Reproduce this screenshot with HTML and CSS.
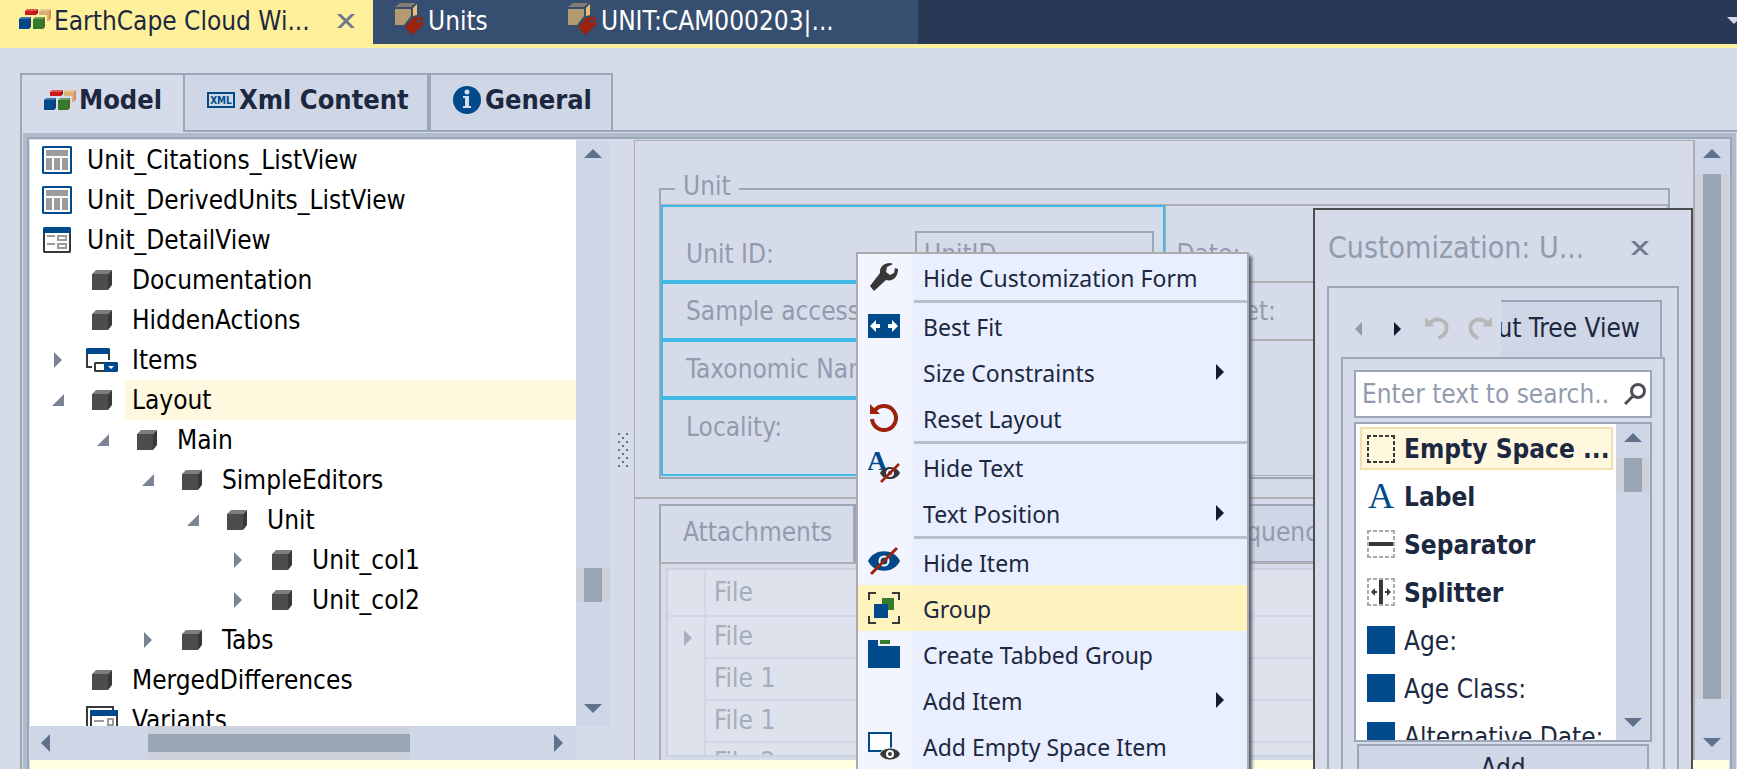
FILE: index.html
```html
<!DOCTYPE html>
<html lang="en">
<head>
<meta charset="utf-8">
<title>EarthCape Cloud</title>
<link rel="stylesheet" href="styles.css">
</head>
<body>
<svg class="defs" aria-hidden="true">
  <symbol id="cube" viewBox="0 0 20 20"><path fill="#7d7d7d" d="M4 0h16l-4 4H0z"/><path fill="#4c4c4c" d="M0 4h16v16H0z"/><path fill="#383838" d="M16 4l4-4v15l-4 5z"/></symbol>
  <symbol id="blocks" viewBox="0 0 32 20"><path fill="#e0574f" d="M8 0h11l-2 2H6z"/><path fill="#cb1a1b" d="M6 2h11v4H6z"/><path fill="#a01515" d="M17 2l2-2v4l-2 2z"/><path fill="#e8c691" d="M22 0h10l-2 2H20z"/><path fill="#dbb078" d="M20 2h10v10h-2V6h-8z"/><path fill="#d08f5c" d="M30 2l2-2v9l-2 3z"/><path fill="#3d75ad" d="M2 8h10l-2 2H0z"/><path fill="#004a8c" d="M0 10h10v10H0z"/><path fill="#173a77" d="M10 10l2-2v10l-2 2z"/><path fill="#69a164" d="M16 8h10l-2 2H14z"/><path fill="#337b2d" d="M14 10h10v10H14z"/><path fill="#56611f" d="M24 10l2-2v10l-2 2z"/></symbol>
  <symbol id="tagbox" viewBox="0 0 28 32"><path fill="#857d73" d="M5 0h15l-4 4H0z"/><path fill="#b39a70" d="M0 6h16v7l-7 9H0z"/><path fill="#e9bd74" d="M22 1v11l-4 1V5z"/><path fill="#9c220e" fill-rule="evenodd" d="M19 14h7l2 2v6L17 32l-7-8zM24 16a2 2 0 100 4 2 2 0 000-4z"/></symbol>
  <symbol id="listview" viewBox="0 0 30 28"><path fill="#004a8c" fill-rule="evenodd" d="M1 0h28l1 1v26l-1 1H1l-1-1V1zM2 2v24h26V2z"/><path fill="#9b9b9b" d="M4 4h22v6H4zM4 12h6v12H4zM12 12h6v12h-6zM20 12h6v12h-6z"/></symbol>
  <symbol id="detail" viewBox="0 0 28 26"><path fill="#383838" fill-rule="evenodd" d="M0 4h28v21l-1 1H1l-1-1zM2 6v18h24V6z"/><path fill="#004a8c" d="M1 0h26l1 1v5H0V1z"/><path fill="#9b9b9b" d="M4 8h8v2H4zM4 16h8v2H4z"/><path fill="none" stroke="#9b9b9b" stroke-width="2" d="M15 9h8v4h-8zM15 17h8v4h-8z"/></symbol>
  <symbol id="items" viewBox="0 0 32 24"><path fill="none" stroke="#383838" stroke-width="2" d="M1 5v14h5M23 5v7"/><path fill="#004a8c" d="M1 0h22l1 1v5H0V1z"/><path fill="#383838" d="M9 14h9v10H9l-1-1v-8z"/><path fill="#fff" d="M10 16h8v6h-8z"/><path fill="#004a8c" d="M18 14h13l1 1v8l-1 1H18z"/><path fill="#fff" d="M22 18h6l-3 3z"/></symbol>
  <symbol id="variants" viewBox="0 0 32 28"><path fill="none" stroke="#383838" stroke-width="2" d="M1 28V1h26v3"/><path fill="#383838" d="M4 4h28v24h-2V10H6v18H4z"/><path fill="#004a8c" d="M5 4h26l1 1v5H4V5z"/><path fill="#9b9b9b" d="M8 14h10v2H8z"/><path fill="none" stroke="#9b9b9b" stroke-width="2" d="M22 13h5v6h-5z"/></symbol>
  <symbol id="closed" viewBox="0 0 8 16"><path d="M0 0l8 8-8 8z"/></symbol>
  <symbol id="opened" viewBox="0 0 12 12"><path d="M12 0v12H0z"/></symbol>
  <symbol id="up" viewBox="0 0 18 9"><path d="M9 0l9 9H0z"/></symbol>
  <symbol id="down" viewBox="0 0 18 9"><path d="M0 0h18L9 9z"/></symbol>
  <symbol id="left" viewBox="0 0 9 18"><path d="M9 0v18L0 9z"/></symbol>
  <symbol id="right" viewBox="0 0 9 18"><path d="M0 0l9 9-9 9z"/></symbol>
  <symbol id="cross" viewBox="0 0 18 14"><path d="M0 0h4l5 5 5-5h4l-7 7 7 7h-4L9 9l-5 5H0l7-7z"/></symbol>
  <symbol id="undo" viewBox="0 0 26 26"><path fill="none" stroke="#b7b7b7" stroke-width="4" d="M4 8C12 0 23 4 22.500 13C22 19 18 21 14 23"/><path fill="#b7b7b7" d="M0 1v10h10z"/></symbol>
</svg>

<nav class="doctabs" aria-label="Documents">
  <div class="doctab active"><svg class="i-blocks"><use href="#blocks"/></svg><span class="grow">EarthCape Cloud Wi...</span><button class="plain" aria-label="Close tab"><svg class="i-cross"><use href="#cross"/></svg></button></div>
  <div class="doctab units"><svg class="i-tag"><use href="#tagbox"/></svg><span>Units</span></div>
  <div class="doctab record"><svg class="i-tag"><use href="#tagbox"/></svg><span>UNIT:CAM000203|...</span></div>
  <button class="plain more" aria-label="More tabs"><svg class="i-down"><use href="#down"/></svg></button>
</nav>

<main class="workspace">
  <div class="tabs" role="tablist">
    <button role="tab" aria-selected="true" class="tab on"><svg class="i-blocks"><use href="#blocks"/></svg>Model</button>
    <button role="tab" class="tab xml"><svg class="i-xml" viewBox="0 0 28 16"><path fill="none" stroke="#004a8c" stroke-width="2" d="M1 1h26v14H1z"/><text x="14" y="12" text-anchor="middle">XML</text></svg>Xml Content</button>
    <button role="tab" class="tab gen"><svg class="i-info" viewBox="0 0 28 28"><circle cx="14" cy="14" r="14" fill="#004a8c"/><circle cx="14" cy="6" r="2.500" fill="#d5dbe9"/><path fill="#d5dbe9" d="M10 10h6v10h2v2h-8v-2h2v-8h-2z"/></svg>General</button>
    <span class="tabline"></span>
  </div>
  <div class="pane"><div class="band"><div class="frame">
    <div class="split">
      <section class="model">
        <div class="treerow">
          <ul class="tree">
            <li class="l0"><span class="ico"><svg class="i-list"><use href="#listview"/></svg></span><span class="lab">Unit_Citations_ListView</span></li>
            <li class="l0"><span class="ico"><svg class="i-list"><use href="#listview"/></svg></span><span class="lab">Unit_DerivedUnits_ListView</span></li>
            <li class="l0"><span class="ico"><svg class="i-detail"><use href="#detail"/></svg></span><span class="lab">Unit_DetailView</span></li>
            <li class="l1"><span class="exp"></span><span class="ico"><svg class="i-cube"><use href="#cube"/></svg></span><span class="lab">Documentation</span></li>
            <li class="l1"><span class="exp"></span><span class="ico"><svg class="i-cube"><use href="#cube"/></svg></span><span class="lab">HiddenActions</span></li>
            <li class="l1"><span class="exp"><svg class="i-closed"><use href="#closed"/></svg></span><span class="ico"><svg class="i-items"><use href="#items"/></svg></span><span class="lab">Items</span></li>
            <li class="l1"><span class="exp"><svg class="i-opened"><use href="#opened"/></svg></span><span class="ico"><svg class="i-cube"><use href="#cube"/></svg></span><span class="lab sel">Layout</span></li>
            <li class="l2"><span class="exp"><svg class="i-opened"><use href="#opened"/></svg></span><span class="ico"><svg class="i-cube"><use href="#cube"/></svg></span><span class="lab">Main</span></li>
            <li class="l3"><span class="exp"><svg class="i-opened"><use href="#opened"/></svg></span><span class="ico"><svg class="i-cube"><use href="#cube"/></svg></span><span class="lab">SimpleEditors</span></li>
            <li class="l4"><span class="exp"><svg class="i-opened"><use href="#opened"/></svg></span><span class="ico"><svg class="i-cube"><use href="#cube"/></svg></span><span class="lab">Unit</span></li>
            <li class="l5"><span class="exp"><svg class="i-closed"><use href="#closed"/></svg></span><span class="ico"><svg class="i-cube"><use href="#cube"/></svg></span><span class="lab">Unit_col1</span></li>
            <li class="l5"><span class="exp"><svg class="i-closed"><use href="#closed"/></svg></span><span class="ico"><svg class="i-cube"><use href="#cube"/></svg></span><span class="lab">Unit_col2</span></li>
            <li class="l3"><span class="exp"><svg class="i-closed"><use href="#closed"/></svg></span><span class="ico"><svg class="i-cube"><use href="#cube"/></svg></span><span class="lab">Tabs</span></li>
            <li class="l1"><span class="exp"></span><span class="ico"><svg class="i-cube"><use href="#cube"/></svg></span><span class="lab">MergedDifferences</span></li>
            <li class="l1"><span class="exp"></span><span class="ico"><svg class="i-variants"><use href="#variants"/></svg></span><span class="lab">Variants</span></li>
          </ul>
          <div class="vbar treebar"><svg class="i-up"><use href="#up"/></svg><span class="gap"></span><span class="thumb"></span><span class="rest"></span><svg class="i-down"><use href="#down"/></svg></div>
        </div>
        <div class="hbar"><svg class="i-side"><use href="#left"/></svg><span class="hthumb"></span><span class="grow"></span><svg class="i-side"><use href="#right"/></svg></div>
      </section>
      <div class="splitter"><svg class="i-dots" viewBox="0 0 10 34"><path fill="#60718d" d="M0 0h2v2H0zM8 0h2v2H8zM4 4h2v2H4zM0 8h2v2H0zM8 8h2v2H8zM4 12h2v2H4zM0 16h2v2H0zM8 16h2v2H8zM4 20h2v2H4zM0 24h2v2H0zM8 24h2v2H8zM4 28h2v2H4zM0 32h2v2H0zM8 32h2v2H8z"/></svg></div>
      <section class="designer">
        <div class="upper">
          <fieldset class="group">
            <legend>Unit</legend>
            <div class="cols">
              <div class="col picked">
                <div class="cell first"><label for="uid">Unit ID:</label><input id="uid" value="UnitID"></div>
                <div class="cell">Sample accession:</div>
                <div class="cell">Taxonomic Name:</div>
                <div class="cell last">Locality:</div>
              </div>
              <div class="col">
                <div class="cell first">Date:</div>
                <div class="cell">Dataset:</div>
                <div class="cell rest"></div>
              </div>
            </div>
          </fieldset>
        </div>
        <div class="lower">
          <div class="subtabs" role="tablist"><button role="tab" class="subtab on">Attachments</button><button role="tab" class="subtab more-tabs">Sequences</button></div>
          <div class="subpane">
            <div class="gridbox">
              <table class="grid">
                <thead><tr><th class="ind"></th><th>File</th></tr></thead>
                <tbody>
                  <tr><td class="ind"><svg class="i-closed"><use href="#closed"/></svg></td><td>File</td></tr>
                  <tr><td class="ind"></td><td>File 1</td></tr>
                  <tr><td class="ind"></td><td>File 1</td></tr>
                  <tr><td class="ind"></td><td>File 2</td></tr>
                </tbody>
              </table>
            </div>
          </div>
        </div>
      </section>
      <div class="vbar pagebar"><svg class="i-up"><use href="#up"/></svg><span class="track"></span><svg class="i-down"><use href="#down"/></svg></div>
    </div>
    <div class="hint"></div>
  </div></div></div>
</main>

<section class="dialog" aria-label="Customization">
  <header class="dtitle"><span class="grow">Customization: U...</span><button class="plain" aria-label="Close"><svg class="i-cross"><use href="#cross"/></svg></button></header>
  <div class="dbox">
    <div class="dtools">
      <button class="plain" aria-label="Back"><svg class="i-nav dim"><use href="#left"/></svg></button>
      <button class="plain fwd" aria-label="Forward"><svg class="i-nav"><use href="#right"/></svg></button>
      <button class="plain un" aria-label="Undo"><svg class="i-undo"><use href="#undo"/></svg></button>
      <button class="plain re" aria-label="Redo"><svg class="i-undo" viewBox="0 0 26 26"><g transform="translate(26 0) scale(-1 1)"><use href="#undo"/></g></svg></button>
      <button class="treeview"><span>Layout Tree View</span></button>
    </div>
    <div class="dbody">
      <div class="search"><input type="text" aria-label="Search" placeholder="Enter text to search.."><svg class="i-search" viewBox="0 0 22 22"><circle cx="14" cy="8" r="6.500" fill="none" stroke="#4f4c5c" stroke-width="3"/><path stroke="#4f4c5c" stroke-width="3" d="M9 13l-8 8"/></svg></div>
      <div class="listbox">
        <ul class="palette">
          <li class="bold cur"><svg class="i-pal" viewBox="0 0 28 28"><path class="dash dark" d="M0 1h28M0 27h28M1 0v28M27 0v28"/></svg>Empty Space ...</li>
          <li class="bold"><svg class="i-pal" viewBox="0 0 28 28"><text class="serif-a" x="14" y="26" text-anchor="middle">A</text></svg>Label</li>
          <li class="bold"><svg class="i-pal" viewBox="0 0 28 28"><path class="dash" d="M0 1h28M0 27h28M1 0v28M27 0v28"/><path fill="#383838" d="M2 12h24v4H2z"/></svg>Separator</li>
          <li class="bold"><svg class="i-pal" viewBox="0 0 28 28"><path class="dash" d="M0 1h28M0 27h28M1 0v28M27 0v28"/><path fill="#383838" d="M12 2h4v24h-4zM4 14l4-4v3h2v2H8v3zM24 14l-4-4v3h-2v2h2v3z"/></svg>Splitter</li>
          <li><span class="sq"></span>Age:</li>
          <li><span class="sq"></span>Age Class:</li>
          <li><span class="sq"></span>Alternative Date:</li>
        </ul>
        <div class="vbar listbar"><svg class="i-up"><use href="#up"/></svg><span class="thumb"></span><span class="rest"></span><svg class="i-down"><use href="#down"/></svg></div>
      </div>
      <button class="add">Add</button>
    </div>
  </div>
</section>

<div class="menu" role="menu">
  <button role="menuitem"><span class="mi"><svg class="m28" viewBox="0 0 28 28"><path fill="#383838" d="M23 1c-6-3-14 2-13 9L0 23l4 5 12-11c7 2 12-3 12-11l-3-1-1 5-4 2-4-3 1-5z"/></svg></span><span class="mt">Hide Customization Form</span></button>
  <hr>
  <button role="menuitem"><span class="mi"><svg class="m32s" viewBox="0 0 32 24"><path fill="#004a8c" d="M0 0h32v24H0z"/><path fill="#fff" d="M2 12l6-6v4h4v4H8v4zM30 12l-6-6v4h-4v4h4v4z"/></svg></span><span class="mt">Best Fit</span></button>
  <button role="menuitem"><span class="mi"></span><span class="mt">Size Constraints</span><svg class="i-sub"><use href="#closed"/></svg></button>
  <button role="menuitem"><span class="mi"><svg class="m28" viewBox="0 0 28 28"><path fill="none" stroke="#9c220e" stroke-width="4" d="M2 15A12 12 0 1 0 5 6"/><path fill="#9c220e" d="M0 0v10h10L7 7z"/></svg></span><span class="mt">Reset Layout</span></button>
  <hr>
  <button role="menuitem"><span class="mi"><svg class="m32" viewBox="0 0 32 32"><text class="serif-b" x="9" y="19" text-anchor="middle">A</text><path fill="#383838" fill-rule="evenodd" d="M12 22c4-8 16-8 20 0-4 8-16 8-20 0zM22 18a4 4 0 100 8 4 4 0 000-8z"/><circle cx="22" cy="22" r="2" fill="#383838"/><path stroke="#9c220e" stroke-width="2.500" d="M13 31l18-18"/></svg></span><span class="mt">Hide Text</span></button>
  <button role="menuitem"><span class="mi"></span><span class="mt">Text Position</span><svg class="i-sub"><use href="#closed"/></svg></button>
  <hr>
  <button role="menuitem"><span class="mi"><svg class="m32" viewBox="0 0 32 32"><path fill="#004a8c" d="M0 15c6-13 26-13 32 0-6 13-26 13-32 0z"/><circle cx="16" cy="15" r="4.500" fill="none" stroke="#fff" stroke-width="2"/><path stroke="#9c220e" stroke-width="3" d="M3 28L29 2"/></svg></span><span class="mt">Hide Item</span></button>
  <button role="menuitem" class="hot"><span class="mi"><svg class="m32" viewBox="0 0 32 32"><path fill="none" stroke="#383838" stroke-width="2" d="M1 8V1h7M24 1h7v7M31 24v7h-7M8 31H1v-7"/><path fill="#337b2d" d="M14 6h12v12H14z"/><path fill="#004a8c" d="M6 12h14v14H6z"/></svg></span><span class="mt">Group</span></button>
  <button role="menuitem"><span class="mi"><svg class="m32" viewBox="0 0 32 32"><path fill="#004a8c" d="M0 2h10v6h22v22H0z"/><path fill="#337b2d" d="M12 2h10v4H12z"/></svg></span><span class="mt">Create Tabbed Group</span></button>
  <button role="menuitem"><span class="mi"></span><span class="mt">Add Item</span><svg class="i-sub"><use href="#closed"/></svg></button>
  <button role="menuitem"><span class="mi"><svg class="m32" viewBox="0 0 32 32"><path fill="#fff" stroke="#004a8c" stroke-width="2" d="M1 3h22v18H1z"/><path fill="#383838" stroke="#f2f5ff" d="M11.500 24c4-8 17-8 21 0-4 8-17 8-21 0z"/><circle cx="22" cy="24" r="3" fill="none" stroke="#fff" stroke-width="2"/></svg></span><span class="mt">Add Empty Space Item</span></button>
</div>
</body>
</html>
```
FILE: styles.css
```css
* { box-sizing: border-box; }
:root {
  --bg: #d5dbe9;
  --bg2: #cfd6e6;
  --line: #9ba7b7;
  --warm: #b0aeb0;
  --ink: #1b2840;
  --dim: #929bad;
  --blue: #004a8c;
  --arrow: #60718d;
}
body {
  margin: 0;
  height: 100vh;
  overflow: hidden;
  position: relative;
  display: flex;
  flex-direction: column;
  background: var(--bg);
  color: var(--ink);
  font: 26px/40px "DejaVu Sans Condensed", "Noto Sans", sans-serif;
}
button, input { font: inherit; color: inherit; margin: 0; }
button { border: 0; background: none; padding: 0; text-align: left; white-space: nowrap; }
ul { list-style: none; margin: 0; padding: 0; }
svg { display: block; flex: none; }
.defs { position: absolute; width: 0; height: 0; }
.grow { flex: 1; }
.plain { display: flex; }

.i-blocks { width: 32px; height: 20px; }
.i-tag { width: 28px; height: 32px; }
.i-cross { width: 18px; height: 14px; fill: #6c788c; }
.i-list { width: 30px; height: 28px; }
.i-detail { width: 28px; height: 26px; }
.i-cube { width: 20px; height: 20px; }
.i-items { width: 32px; height: 24px; }
.i-variants { width: 32px; height: 28px; }
.i-closed { width: 8px; height: 16px; fill: #7b8494; }
.i-opened { width: 12px; height: 12px; fill: #7b8494; }
.i-up, .i-down { width: 18px; height: 9px; fill: var(--arrow); }
.i-side { width: 9px; height: 18px; fill: var(--arrow); }
.i-dots { width: 10px; height: 34px; }

/* document tabs */
.doctabs { display: flex; flex: none; height: 48px; background: #293955; border-bottom: 4px solid #fff09c; }
.doctab { display: flex; align-items: center; height: 44px; background: #364e6f; color: #fff; white-space: nowrap; }
.doctab span { height: 44px; line-height: 42px; }
.doctab.active { width: 373px; height: 48px; align-items: flex-start; padding: 0 18px 0 19px; background: #fff09c; color: var(--ink); }
.active .i-blocks { margin: 9px 3px 0 0; }
.active .plain { margin-top: 14px; }
.units { width: 174px; padding-left: 22px; gap: 5px; }
.record { width: 371px; padding-left: 21px; gap: 5px; }
.doctab .i-tag { margin-bottom: 6px; }
.more { margin-left: auto; overflow: hidden; width: 10px; padding-top: 17px; }
.more .i-down { width: 14px; height: 7px; fill: var(--bg); }

/* page tabs */
.workspace { flex: 1; min-height: 0; display: flex; flex-direction: column; padding: 25px 0 0 20px; }
.tabs { display: flex; flex: none; height: 59px; font-weight: bold; font-size: 27px; }
.tab { display: flex; align-items: center; border: 2px solid var(--line); background: var(--bg2); font-weight: bold; padding: 0 20px 5px; }
.tab.on { width: 163px; background: none; border-right: 0; border-bottom: 0; padding: 0 0 7px 22px; gap: 3px; }
.tab.xml { width: 246px; padding-left: 22px; gap: 4px; }
.tab.gen { width: 184px; padding-left: 22px; gap: 4px; }
.tabline { flex: 1; border-bottom: 2px solid var(--line); }
.i-xml { width: 28px; height: 16px; }
.i-xml text { font: bold 10px "DejaVu Sans Condensed", sans-serif; fill: var(--blue); }
.i-info { width: 28px; height: 28px; }
.pane { flex: 1; min-height: 0; display: flex; border-left: 2px solid var(--line); padding: 1px 1px 0; }
.band { flex: 1; min-width: 0; display: flex; border: 4px solid #b0bccc; border-bottom: 0; }
.frame { flex: 1; min-width: 0; display: flex; flex-direction: column; border: 2px solid var(--line); border-bottom: 0; padding: 1px 1px 0; }
.split { flex: 1; min-height: 0; display: flex; }
.hint { flex: none; height: 9px; background: #ffffe1; }

/* model tree */
.model { width: 580px; flex: none; display: flex; flex-direction: column; color: #000; }
.treerow { flex: 1; min-height: 0; display: flex; }
.tree { flex: 1; min-width: 0; overflow: hidden; background: #fff; }
.tree li { display: flex; height: 40px; }
.tree .l0 { padding-left: 1px; }
.tree .l1 { padding-left: 10px; }
.tree .l2 { padding-left: 55px; }
.tree .l3 { padding-left: 100px; }
.tree .l4 { padding-left: 145px; }
.tree .l5 { padding-left: 190px; }
.exp { width: 36px; flex: none; display: flex; align-items: center; justify-content: center; }
.ico { width: 49px; flex: none; display: flex; align-items: center; justify-content: center; padding-left: 2px; }
.lab { flex: 1; padding-left: 7px; }
.sel { background: #fff8df; }
.vbar { width: 34px; flex: none; display: flex; flex-direction: column; align-items: center; background: var(--bg2); padding: 9px 0 13px; }
.vbar .gap { flex: 410; }
.vbar .rest { flex: 102; }
.thumb { width: 34px; height: 34px; flex: none; border: solid #ccd1dc; border-width: 0 8px; background: #9aa6b6; }
.hbar { display: flex; align-items: center; height: 34px; width: 546px; background: var(--bg2); padding: 0 13px 0 11px; }
.hthumb { width: 262px; height: 34px; margin-left: 98px; border: solid #ccd1dc; border-width: 8px 0; background: #9aa6b6; }
.splitter { width: 24px; flex: none; display: flex; align-items: center; justify-content: center; padding-left: 2px; }

/* layout designer */
.designer { flex: 1; min-width: 0; display: flex; flex-direction: column; border: 1px solid var(--warm); border-right-width: 2px; border-bottom: 0; color: var(--dim); overflow: hidden; }
.upper { flex: none; padding: 33px 23px 18px 24px; border-bottom: 2px solid var(--warm); }
.group { margin: 0; min-width: 0; padding: 0 0 1px; border: 2px solid var(--line); }
.group legend { margin-left: 14px; padding: 0 8px 6px; line-height: 24px; }
.cols { display: grid; grid-template-columns: minmax(0, 1fr) minmax(0, 1fr); border-top: 1px solid var(--warm); }
.col { display: flex; flex-direction: column; border-left: 1px solid var(--warm); }
.cell { display: flex; align-items: center; height: 58px; padding: 0 11px; border: 1px solid var(--warm); border-left: 0; white-space: nowrap; }
.picked { border: 0; }
.picked .cell { border: 2px solid #40b9e8; padding: 0 9px 0 23px; }
.cell.first { height: 77px; padding-top: 20px; }
.picked .cell.first { padding-top: 20px; }
.picked .cell.last { height: 78px; padding-bottom: 20px; }
.cell.rest { flex: 1; }
.cell label { width: 229px; }
.cell input { flex: 1; min-width: 0; height: 46px; padding: 0 7px; border: 2px solid var(--line); background: none; color: var(--dim); }
.lower { flex: 1; min-height: 0; display: flex; flex-direction: column; padding: 5px 23px 0 24px; }
.subtabs { display: flex; flex: none; height: 58px; }
.subtab { border: 2px solid var(--line); border-bottom-width: 1px; background: var(--bg2); padding: 0 22px 4px; }
.subtab.on { width: 196px; border-bottom: 0; background: none; padding: 0 0 4px 22px; }
.more-tabs { flex: 1; padding-left: 360px; }
.subpane { flex: 1; min-height: 0; border: 2px solid var(--warm); border-bottom: 0; padding: 4px 5px 3px; }
.gridbox { height: 100%; overflow: hidden; border: 2px solid #c9d0de; background: #dee2ed; color: #a7adba; }
.grid { width: 100%; border-collapse: collapse; table-layout: fixed; }
.grid th, .grid td { height: 42px; padding: 0 0 2px 8px; border-bottom: 2px solid #d2d7e6; text-align: left; font-weight: normal; line-height: 38px; }
.grid th { height: 46px; }
.grid th.ind { width: 37px; }
.grid .ind { border-right: 2px solid #d2d7e6; padding: 0 0 0 16px; }
.grid td.ind { border-bottom: 0; }
.grid .i-closed { fill: #a9b1c1; }
.pagebar .track { flex: 1; width: 34px; margin: 16px 0 39px; border: solid #ccd1dc; border-width: 0 8px; background: #9aa6b6; }

/* customization dialog */
.dialog { position: absolute; top: 208px; right: 44px; bottom: -60px; width: 380px; display: flex; flex-direction: column; border: 2px solid #4d4d50; background: var(--bg); padding: 0 12px; }
.dtitle { display: flex; align-items: center; height: 76px; flex: none; padding: 0 30px 0 1px; font-size: 30px; color: var(--dim); }
.dbox { flex: 1; display: flex; flex-direction: column; border: 2px solid var(--line); padding: 12px 12px 0; }
.dtools { display: flex; align-items: center; height: 57px; padding: 0 3px 0 14px; }
.i-nav { width: 7px; height: 14px; fill: #111c30; }
.i-nav.dim { fill: #929bad; }
.fwd { margin-left: 32px; }
.un { margin-left: 24px; }
.re { margin-left: 17px; }
.i-undo { width: 25px; height: 25px; }
.treeview { flex: 1; min-width: 0; margin-left: 9px; height: 57px; display: flex; align-items: center; justify-content: flex-end; overflow: hidden; padding: 0 20px 3px 0; border: 2px solid var(--line); border-width: 2px 2px 0 0; background: var(--bg2); }
.dbody { flex: 1; display: flex; flex-direction: column; border: 2px solid var(--line); padding: 11px; }
.search { display: flex; align-items: center; height: 48px; flex: none; padding-right: 4px; border: 2px solid var(--line); background: #fff; }
.search input { flex: 1; min-width: 0; height: 44px; border: 0; padding: 0 0 0 6px; background: none; }
.search input::placeholder { color: var(--dim); opacity: 1; }
.i-search { width: 22px; height: 22px; }
.listbox { display: flex; flex: none; height: 320px; margin-top: 4px; border: 2px solid var(--line); background: #fff; overflow: hidden; }
.palette { flex: 1; min-width: 0; padding: 0 3px 0 4px; height: 316px; overflow: hidden; }
.palette li { display: flex; align-items: center; gap: 9px; height: 48px; padding: 2px 0 0 7px; white-space: nowrap; }
.palette .bold { font-weight: bold; }
.palette .cur { height: 43px; margin: 3px 0 2px; padding: 0 0 0 5px; border: 2px solid #f3dfae; background: #fff8df; }
.i-pal { width: 28px; height: 28px; margin-bottom: 2px; }
.cur .i-pal { margin-bottom: 0; }
.sq { width: 28px; height: 28px; background: var(--blue); margin-bottom: 3px; }
.dash { fill: none; stroke: #adadad; stroke-width: 2; stroke-dasharray: 4 2; }
.dash.dark { stroke: #383838; }
.serif-a { font: 36px "Liberation Serif", serif; fill: var(--blue); }
.serif-b { font: bold 28px "Liberation Serif", serif; fill: var(--blue); }
.listbar .thumb { margin-top: 16px; }
.add { flex: none; height: 48px; margin: 2px 3px 0; border: 2px solid var(--line); background: var(--bg2); text-align: center; }

/* context menu */
.menu { position: absolute; top: 252px; left: 856px; bottom: -30px; width: 393px; overflow: hidden; border: 2px solid #ababab; background: linear-gradient(90deg, #f2f5ff 54px, #e9efff 54px); box-shadow: 3px 4px 3px #5a6070; font-family: "Noto Sans", "Open Sans", sans-serif; font-size: 23px; }
.menu button { display: flex; align-items: center; width: 100%; height: 46px; padding-right: 23px; }
.menu hr { height: 3px; margin: 0 0 0 56px; border: 0; background: #bac0ca; }
.menu .hot { background: #fef2be; }
.mi { width: 65px; flex: none; padding-left: 10px; }
.mt { flex: 1; padding-top: 2px; }
.i-sub { width: 8px; height: 16px; fill: #111c30; }
.m28 { width: 28px; height: 28px; margin-left: 2px; }
.m32 { width: 32px; height: 32px; }
.m32s { width: 32px; height: 24px; }
```
